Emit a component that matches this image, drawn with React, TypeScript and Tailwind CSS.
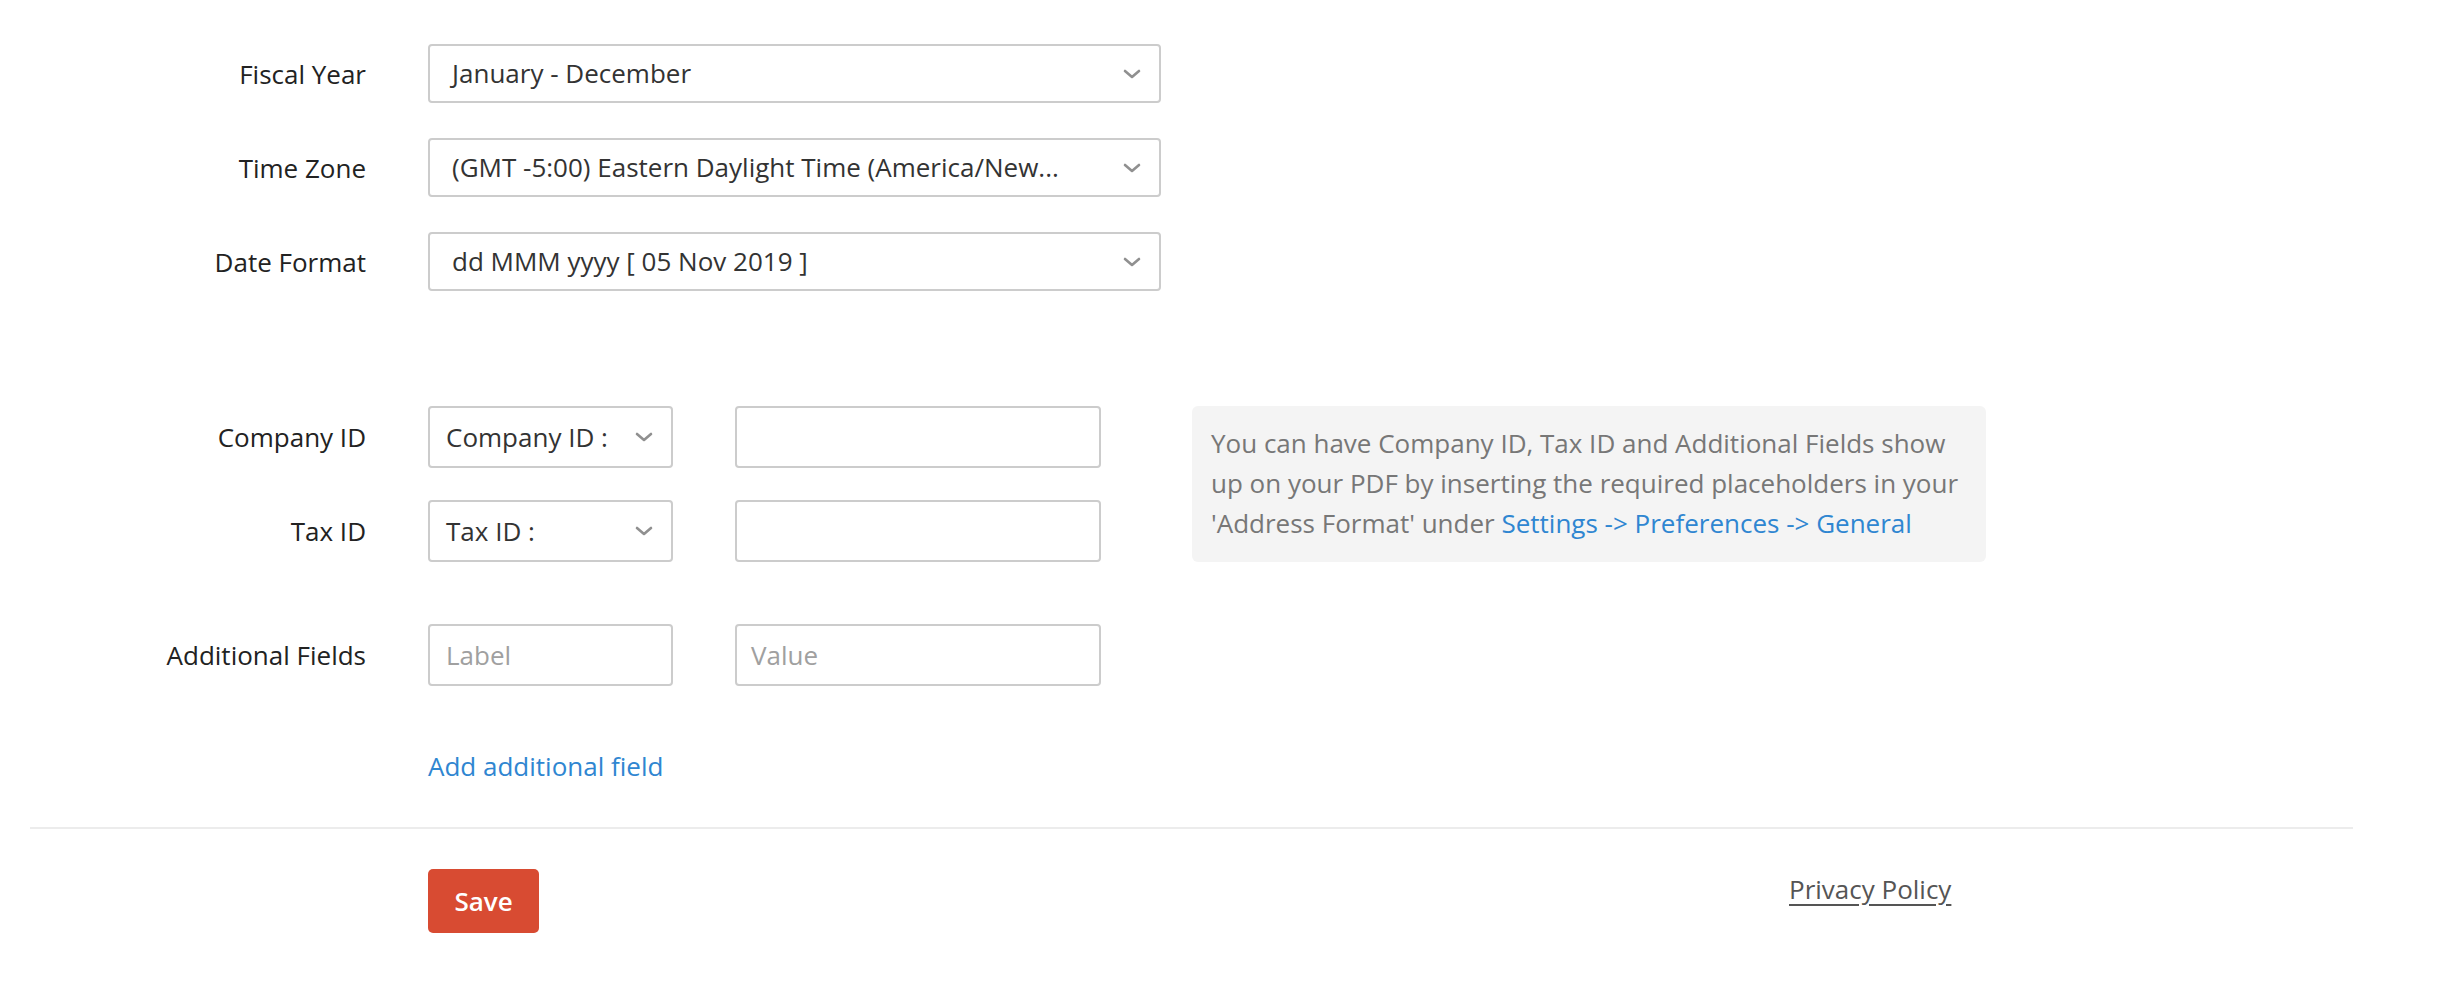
import React from "react";

function Chevron() {
  return (
    <svg width="20" height="12" viewBox="0 0 20 12" className="shrink-0">
      <polyline points="3,3 10,9 17,3" fill="none" stroke="#909090" strokeWidth="2.6" strokeLinecap="round" strokeLinejoin="round" />
    </svg>
  );
}

function Label({ children }: { children: React.ReactNode }) {
  return (
    <div className="w-[366px] shrink-0 text-right text-[26px] text-[#222222] leading-none">{children}</div>
  );
}

function BigSelect({ value }: { value: string }) {
  return (
    <div className="ml-[62px] flex h-[59px] w-[733px] items-center justify-between rounded-[4px] border-2 border-[#cccccc] pl-[22px] pr-[17px]">
      <span className="whitespace-nowrap text-[26px] text-[#333333]">{value}</span>
      <Chevron />
    </div>
  );
}

function SmallSelect({ value }: { value: string }) {
  return (
    <div className="ml-[62px] flex h-[62px] w-[245px] items-center justify-between rounded-[4px] border-2 border-[#cccccc] pl-[16px] pr-[17px]">
      <span className="whitespace-nowrap text-[26px] text-[#333333]">{value}</span>
      <Chevron />
    </div>
  );
}

export default function App() {
  return (
    <div className="h-[994px] w-[2444px] bg-white font-['Open_Sans',sans-serif]" style={{ fontFamily: "'Open Sans', sans-serif" }}>
      <div className="pt-[44px]">
        <div className="flex items-center">
          <Label>Fiscal Year</Label>
          <BigSelect value="January - December" />
        </div>
        <div className="mt-[35px] flex items-center">
          <Label>Time Zone</Label>
          <BigSelect value="(GMT -5:00) Eastern Daylight Time (America/New..." />
        </div>
        <div className="mt-[35px] flex items-center">
          <Label>Date Format</Label>
          <BigSelect value="dd MMM yyyy [ 05 Nov 2019 ]" />
        </div>

        <div className="mt-[115px] flex items-start">
          <div className="flex flex-col">
            <div className="flex items-center">
              <Label>Company ID</Label>
              <SmallSelect value="Company ID :" />
              <div className="ml-[62px] h-[62px] w-[366px] rounded-[4px] border-2 border-[#cccccc]" />
            </div>
            <div className="mt-[32px] flex items-center">
              <Label>Tax ID</Label>
              <SmallSelect value="Tax ID :" />
              <div className="ml-[62px] h-[62px] w-[366px] rounded-[4px] border-2 border-[#cccccc]" />
            </div>
          </div>
          <div className="ml-[91px] h-[156px] w-[794px] rounded-[6px] bg-[#f4f4f4] pl-[19px] pt-[17px] text-[26px] leading-[40px] text-[#777777]">
            <div className="whitespace-nowrap">You can have Company ID, Tax ID and Additional Fields show</div>
            <div className="whitespace-nowrap">up on your PDF by inserting the required placeholders in your</div>
            <div className="whitespace-nowrap">
              'Address Format' under <span className="text-[#2f86d1]">Settings -&gt; Preferences -&gt; General</span>
            </div>
          </div>
        </div>

        <div className="mt-[62px] flex items-center">
          <Label>Additional Fields</Label>
          <div className="ml-[62px] flex h-[62px] w-[245px] items-center rounded-[4px] border-2 border-[#cccccc] pl-[16px]">
            <span className="text-[26px] text-[#a0a0a0]">Label</span>
          </div>
          <div className="ml-[62px] flex h-[62px] w-[366px] items-center rounded-[4px] border-2 border-[#cccccc] pl-[14px]">
            <span className="text-[26px] text-[#a0a0a0]">Value</span>
          </div>
        </div>

        <div className="ml-[428px] mt-[61px] h-[38px] text-[26px] leading-[38px] text-[#2f86d1]">Add additional field</div>

        <div className="ml-[30px] mt-[42px] h-[2px] w-[2323px] bg-[#ececec]" />

        <div className="mt-[40px] flex items-start">
          <div className="ml-[428px] flex h-[64px] w-[111px] items-center justify-center rounded-[5px] bg-[#d84b32] text-[26px] font-semibold text-white">
            Save
          </div>
          <div className="ml-[1250px] mt-[1px] text-[26px] leading-[38px] text-[#555555] underline underline-offset-[5px]">Privacy Policy</div>
        </div>
      </div>
    </div>
  );
}
